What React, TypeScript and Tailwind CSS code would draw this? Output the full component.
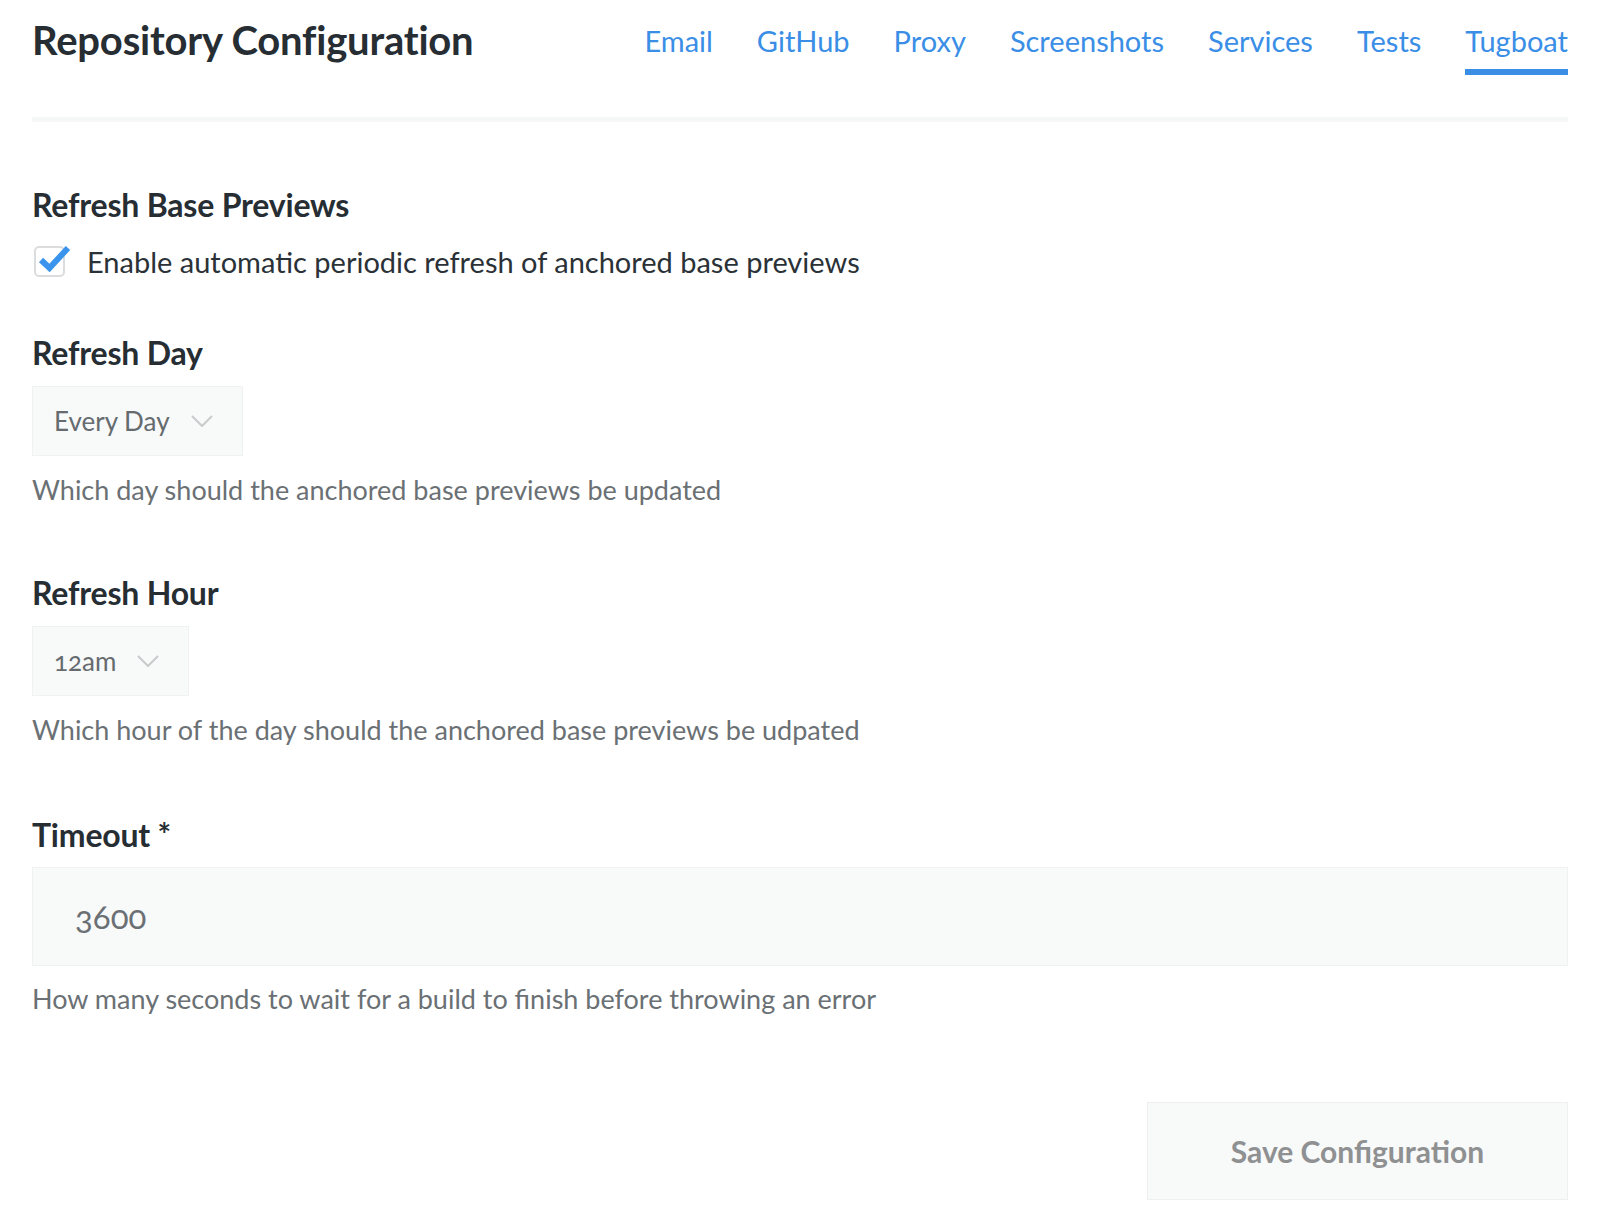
import { useState } from 'react'

const tabs = ['Email', 'GitHub', 'Proxy', 'Screenshots', 'Services', 'Tests', 'Tugboat']

function Chevron() {
  return (
    <svg width="22" height="12" viewBox="0 0 22 12" fill="none" stroke="#c8cbcd" strokeWidth="2">
      <path d="M1 1l10 10 10-10" strokeLinejoin="round" />
    </svg>
  )
}

function Select({ value }: { value: string }) {
  return (
    <div className="mt-[15px] inline-flex h-[70px] items-center gap-[21px] border border-[#f0f2f2] bg-[#f8f9f9] pl-[21px] pr-[29px]">
      <span className="text-[26px] leading-none text-[#656b6f] oldstyle-nums">{value}</span>
      <Chevron />
    </div>
  )
}

export default function App() {
  const [checked, setChecked] = useState(true)

  return (
    <div className="min-h-screen bg-white px-8 pb-[23px] font-['Lato','Open_Sans',sans-serif] text-[#262d33]">
      {/* Header */}
      <div className="flex items-start justify-between pt-[18px]">
        <h1 className="text-[40px] font-bold leading-[44px] tracking-[-0.2px]">Repository Configuration</h1>
        <nav className="flex gap-[44px] pt-[3px]">
          {tabs.map((t) => (
            <a
              key={t}
              href="#"
              className={
                t === 'Tugboat'
                  ? 'border-b-[6px] border-[#3a8ee6] pb-[8px] text-[29px] leading-[40px] text-[#3a8ee6]'
                  : 'border-b-[6px] border-transparent pb-[8px] text-[29px] leading-[40px] text-[#3a8ee6]'
              }
            >
              {t}
            </a>
          ))}
        </nav>
      </div>

      <div className="mt-[42px] h-[5px] bg-[#f6f8f8]" />

      {/* Refresh Base Previews */}
      <h2 className="mt-[65px] text-[32px] font-bold leading-[36px] tracking-[-0.2px]">Refresh Base Previews</h2>
      <label className="mt-[18px] flex h-[40px] cursor-pointer items-center gap-[22px] pl-[2px]" onClick={() => setChecked(!checked)}>
        <span className="relative h-[31px] w-[31px] shrink-0 rounded-[5px] border-2 border-[#dadcdd] bg-white">
          {checked && (
            <svg className="absolute -left-[2px] -top-[2px] overflow-visible" width="31" height="31" viewBox="0 0 31 31" fill="none">
              <path d="M7 14l8.5 8L34 2" stroke="#3a94ee" strokeWidth="6" strokeLinejoin="miter" />
            </svg>
          )}
        </span>
        <span className="text-[29px] leading-none text-[#2b3237]">Enable automatic periodic refresh of anchored base previews</span>
      </label>

      {/* Refresh Day */}
      <h2 className="mt-[54px] text-[32px] font-bold leading-[36px] tracking-[-0.2px]">Refresh Day</h2>
      <Select value="Every Day" />
      <p className="mt-[16px] text-[27px] leading-[36px] text-[#6a7074]">Which day should the anchored base previews be updated</p>

      {/* Refresh Hour */}
      <h2 className="mt-[67px] text-[32px] font-bold leading-[36px] tracking-[-0.2px]">Refresh Hour</h2>
      <Select value="12am" />
      <p className="mt-[16px] text-[27px] leading-[36px] text-[#6a7074]">Which hour of the day should the anchored base previews be udpated</p>

      {/* Timeout */}
      <h2 className="mt-[69px] text-[32px] font-bold leading-[36px] tracking-[-0.2px]">Timeout *</h2>
      <div className="mt-[14px] flex h-[99px] items-center border border-[#f0f2f2] bg-[#f8f9f9] pl-[42px]">
        <span className="text-[33px] leading-none text-[#6a7074] oldstyle-nums">3600</span>
      </div>
      <p className="mt-[15px] text-[27px] leading-[36px] text-[#6a7074]">How many seconds to wait for a build to finish before throwing an error</p>

      {/* Save */}
      <div className="mt-[85px] flex justify-end">
        <button className="flex h-[98px] w-[421px] items-center justify-center border border-[#eef0f0] bg-[#f8f9f9] text-[30px] font-bold text-[#8f9091]">
          Save Configuration
        </button>
      </div>
    </div>
  )
}
